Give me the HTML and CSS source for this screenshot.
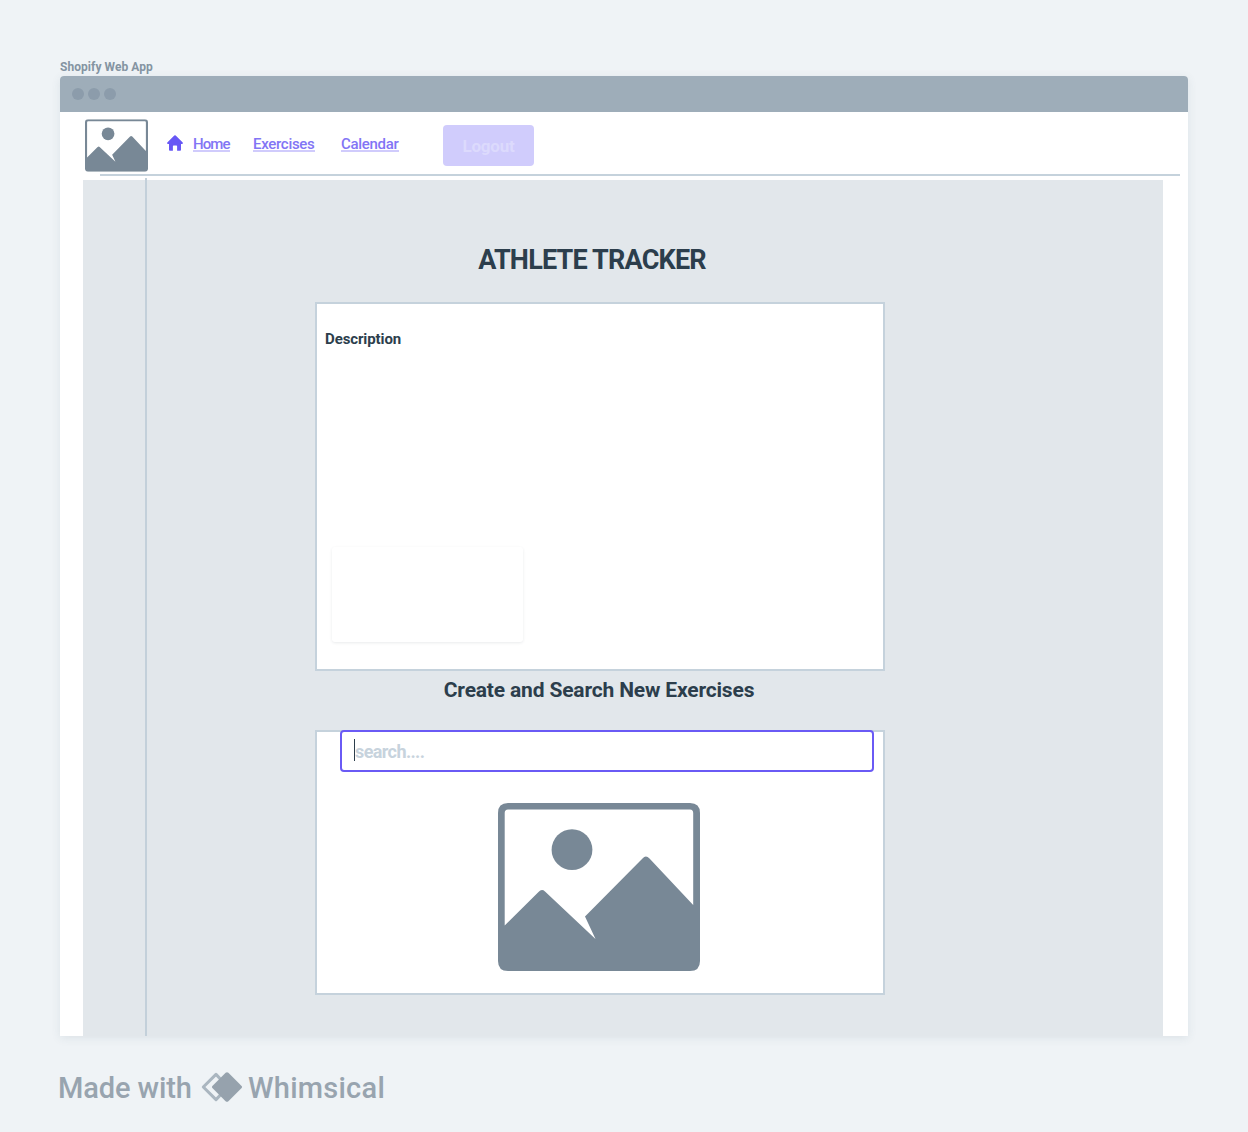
FILE: index.html
```html
<!DOCTYPE html>
<html lang="en">
<head>
<meta charset="utf-8">
<title>Shopify Web App</title>
<link rel="stylesheet" href="styles.css">
</head>
<body>
<svg class="defs" aria-hidden="true">
  <symbol id="picture" viewBox="0 0 202 168">
    <path fill-rule="evenodd" d="M10 0H192Q202 0 202 10V158Q202 168 192 168H10Q0 168 0 158V10Q0 0 10 0ZM10 6.5Q6.7 6.5 6.7 10V122.5L40.5 89Q43.7 85.5 47 88.5L97.5 136L87 113.5L144.5 55.5Q147.8 51.5 151.5 55.5L195.2 102V10Q195.2 6.5 192 6.5Z"/>
    <circle cx="74" cy="46.7" r="20.4"/>
  </symbol>
</svg>
<div class="frame-label"><span>Shopify Web App</span></div>
<div class="window">
  <div class="titlebar"><i class="dot"></i><i class="dot"></i><i class="dot"></i></div>
  <header class="header">
    <div class="bar">
      <svg class="brand" viewBox="0 0 202 168"><use href="#picture"/></svg>
      <svg class="home-icon" viewBox="0 0 16 16"><path d="M7.3.4Q8 0 8.7.4L15.7 7.6Q16.2 8.8 15.1 8.9H14V14.8Q14 15.7 13.1 15.7H10.1V11.2Q10.1 10.5 9.4 10.5H6.6Q5.9 10.5 5.9 11.2V15.7H2.9Q2 15.7 2 14.8V8.9H.9Q-.2 8.8.3 7.6Z"/></svg>
      <nav class="nav">
        <a class="link home">Home</a>
        <a class="link exercises">Exercises</a>
        <a class="link calendar">Calendar</a>
      </nav>
      <div class="logout"><span>Logout</span></div>
    </div>
    <div class="rule"></div>
  </header>
  <div class="content">
    <div class="rail"></div>
    <main class="main">
      <h1 class="title"><span>ATHLETE TRACKER</span></h1>
      <section class="panel description">
        <h3 class="desc-title">Description</h3>
        <div class="card"></div>
      </section>
      <h2 class="subtitle"><span>Create and Search New Exercises</span></h2>
      <section class="panel search-panel">
        <div class="search"><i class="caret"></i><span>search....</span></div>
        <svg class="photo" viewBox="0 0 202 168"><use href="#picture"/></svg>
      </section>
    </main>
  </div>
</div>
<footer class="footer">
  <span class="made">Made with</span>
  <svg class="mark" viewBox="0 0 42 30"><path class="outline" d="M15 2.4L27 15L15 27.6L2.3 15Z"/><path d="M24.6.8Q26 -.3 27.4.8L40.6 14Q41.5 15 40.6 16L27.4 29.2Q26 30.3 24.6 29.2L11.4 16Q10.5 15 11.4 14Z"/></svg>
  <span class="whimsical">Whimsical</span>
</footer>
</body>
</html>
```
FILE: styles.css
```css
* { box-sizing: border-box; }
body {
  margin: 0;
  height: 1132px;
  padding: 59px 60px 0;
  background: #eff3f6;
  color: #2c3e4c;
  font-family: Roboto, "Liberation Sans", sans-serif;
  overflow: hidden;
}
h1, h2, h3 { margin: 0; font-weight: 700; }
svg { display: block; flex: none; fill: #788896; }
.defs { display: none; }
.frame-label {
  height: 17px;
  font-size: 12px;
  line-height: 17px;
  font-weight: 700;
  letter-spacing: 0.05px;
  color: #8494a2;
}
.window {
  display: flex;
  flex-direction: column;
  height: 960px;
  background: #fff;
  border-radius: 4px 4px 0 0;
  overflow: hidden;
  box-shadow: 0 2px 10px rgba(60, 85, 105, 0.1);
}
.titlebar {
  display: flex;
  align-items: center;
  gap: 4px;
  height: 36px;
  padding-left: 12px;
  background: #9eadb9;
}
.dot { width: 12px; height: 12px; border-radius: 50%; background: #8c9cab; }
.header { height: 68px; }
.bar { display: flex; align-items: flex-start; height: 62px; padding: 7px 0 0 25px; }
.brand { width: 63px; height: 53px; }
.home-icon { width: 16px; height: 16px; margin: 16px 0 0 19px; fill: #6757f5; }
.nav { display: flex; gap: 23px; margin: 16px 0 0 10px; }
.link {
  height: 17px;
  font-size: 15px;
  line-height: 18px;
  font-weight: 500;
  color: #8275f5;
  border-bottom: 2px solid #d0cbfc;
  white-space: nowrap;
}
.home { width: 37px; letter-spacing: -0.9px; }
.exercises { width: 62px; letter-spacing: -0.3px; }
.calendar { width: 58px; margin-left: 3px; letter-spacing: -0.3px; }
.logout {
  width: 91px;
  height: 41px;
  margin: 6px 0 0 44px;
  padding-top: 2px;
  border-radius: 4px;
  background: #d0ccfc;
  color: #dcdafc;
  text-align: center;
  font-size: 17px;
  line-height: 39px;
  font-weight: 700;
  letter-spacing: -0.2px;
}
.rule { height: 2px; margin: 0 8px 0 40px; background: #c5d2dc; }
.content { display: flex; flex: 1; width: 1080px; margin-left: 23px; background: #e2e7eb; }
.rail { width: 64px; height: 858px; margin-top: -2px; border-right: 2px solid #c3d0da; }
.main { display: flex; flex-direction: column; width: 738px; padding: 64px 0 0 168px; }
.title {
  height: 58px;
  padding-right: 16px;
  text-align: center;
  white-space: nowrap;
  font-size: 27px;
  line-height: 32px;
  letter-spacing: -0.8px;
}
.panel { width: 570px; border: 2px solid #c5d2dc; background: #fff; }
.description { height: 369px; padding: 25px 0 0 8px; }
.desc-title { font-size: 15px; line-height: 20px; letter-spacing: -0.1px; }
.card { width: 191px; height: 95px; margin: 198px 0 0 7px; border-radius: 3px; background: #fff; box-shadow: 0 1px 3px rgba(40, 55, 70, 0.1); }
.subtitle {
  height: 59px;
  padding: 6px 2px 0 0;
  text-align: center;
  white-space: nowrap;
  font-size: 21px;
  line-height: 27px;
  letter-spacing: -0.17px;
}
.search-panel { height: 265px; }
.search {
  display: flex;
  width: 534px;
  height: 42px;
  margin: -2px 0 0 23px;
  padding: 7px 0 0 12px;
  border: 2px solid #6a5af5;
  border-radius: 4px;
  background: #fff;
  color: #c7d3dd;
  font-size: 18px;
  line-height: 26px;
  font-weight: 700;
  letter-spacing: -0.6px;
}
.caret { width: 1px; height: 22px; background: #2c3e4c; }
.photo { width: 202px; height: 168px; margin: 31px 0 0 181px; }
.footer { display: flex; height: 40px; margin-top: 32px; color: #98a4af; font-weight: 500; font-size: 29px; line-height: 40px; white-space: nowrap; }
.made { width: 142px; margin-left: -2px; letter-spacing: -0.1px; }
.mark { width: 42px; height: 30px; margin-top: 4px; margin-left: 1px; fill: #96a2ad; }
.outline { fill: none; stroke: #aab6c0; stroke-width: 3; stroke-linejoin: round; }
.whimsical { margin-left: 5px; letter-spacing: 0.25px; }
```
